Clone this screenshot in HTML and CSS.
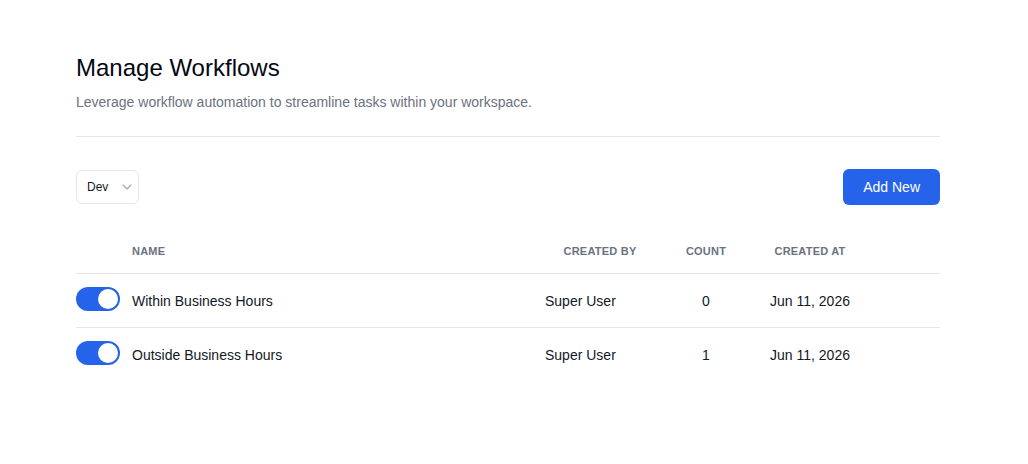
FILE: index.html
```html
<!DOCTYPE html>
<html>
<head>
    <title>Manage Workflows</title>
    <link rel="stylesheet" href="styles.css">
</head>
<body>
    <div class="page">
        <h1 class="title">Manage Workflows</h1>
        <p class="subtitle">Leverage workflow automation to streamline tasks within your workspace.</p>
        <hr class="divider">

        <div class="toolbar">
            <div class="select">
                <span>Dev</span>
                <svg width="10" height="6" viewBox="0 0 10 6"><path d="M1 1l4 4 4-4" fill="none" stroke="#9ca3af" stroke-width="1.1" stroke-linecap="round" stroke-linejoin="round"/></svg>
            </div>
            <button class="btn-primary">Add New</button>
        </div>

        <div class="table">
            <div class="row head">
                <div></div>
                <div>Name</div>
                <div class="center">Created By</div>
                <div class="center">Count</div>
                <div class="center">Created At</div>
                <div></div>
            </div>
            <div class="row">
                <div><span class="toggle on"></span></div>
                <div>Within Business Hours</div>
                <div class="by">Super User</div>
                <div class="center">0</div>
                <div class="center">Jun 11, 2026</div>
                <div></div>
            </div>
            <div class="row">
                <div><span class="toggle on"></span></div>
                <div>Outside Business Hours</div>
                <div class="by">Super User</div>
                <div class="center">1</div>
                <div class="center">Jun 11, 2026</div>
                <div></div>
            </div>
        </div>
    </div>
</body>
</html>
```

FILE: styles.css
```css
body {
    margin: 0;
    font-family: "Liberation Sans", Arial, sans-serif;
    background: #fff;
    color: #111827;
}
.page {
    width: 864px;
    padding: 52px 0 0 76px;
}
.title {
    margin: 0;
    font-size: 24px;
    line-height: 32px;
    font-weight: 400;
    color: #030712;
}
.subtitle {
    margin: 8px 0 0;
    font-size: 14px;
    line-height: 20px;
    color: #6b7280;
}
.divider {
    margin: 24px 0 0;
    border: 0;
    border-top: 1px solid #e5e7eb;
}
.toolbar {
    margin-top: 32px;
    height: 36px;
    display: flex;
    align-items: center;
    justify-content: space-between;
}
.select {
    box-sizing: border-box;
    width: 63px;
    height: 34px;
    border: 1px solid #e5e7eb;
    border-radius: 6px;
    display: flex;
    align-items: center;
    justify-content: space-between;
    padding: 0 6px 0 10px;
    font-size: 12px;
    color: #111827;
}
.btn-primary {
    height: 36px;
    padding: 0 20px;
    border: 0;
    border-radius: 6px;
    background: #2563eb;
    color: #fff;
    font-family: inherit;
    font-size: 14px;
}
.table {
    margin-top: 24px;
}
.row {
    box-sizing: border-box;
    display: grid;
    grid-template-columns: 56px 398px 140px 72px 136px 62px;
    align-items: center;
    height: 54px;
    border-top: 1px solid #e5e7eb;
    font-size: 14px;
}
.row.head {
    height: 44px;
    border-top: 0;
    font-size: 11px;
    font-weight: 700;
    text-transform: uppercase;
    letter-spacing: 0.02em;
    color: #6b7280;
}
.center { text-align: center; }
.by { padding-left: 15px; }
.toggle {
    display: block;
    position: relative;
    width: 44px;
    height: 24px;
    margin-bottom: 3px;
    border-radius: 12px;
    background: #e5e7eb;
}
.toggle.on { background: #2563eb; }
.toggle::after {
    content: "";
    position: absolute;
    top: 2px;
    left: 2px;
    width: 20px;
    height: 20px;
    border-radius: 50%;
    background: #fff;
}
.toggle.on::after { left: 22px; }
```
